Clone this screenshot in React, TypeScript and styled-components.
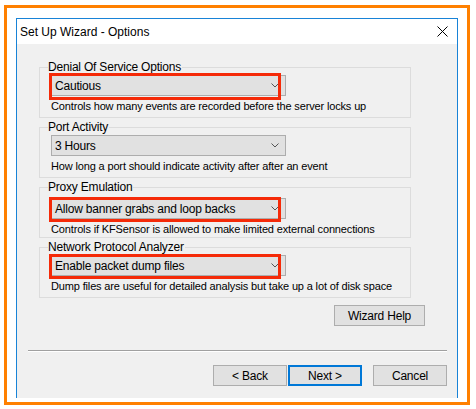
import React from "react";
import styled, { createGlobalStyle } from "styled-components";

const GlobalStyle = createGlobalStyle`
  html, body { margin: 0; padding: 0; background: #ffffff; }
  body { font-family: "Liberation Sans", Arial, sans-serif; color: #000; }
  * { box-sizing: border-box; }
`;

const Page = styled.div`
  width: 476px;
  height: 409px;
  padding: 5px 0 0 4px;
  background: #ffffff;
`;

const Frame = styled.div`
  width: 466px;
  height: 400px;
  border: 3px solid #ff8000;
  padding: 10px 8px 0 9px;
  display: flex;
  flex-direction: column;
  overflow: hidden;
`;

const Window = styled.div`
  width: 442px;
  height: 380px;
  border: 1px solid #1883d7;
  border-bottom: none;
  display: flex;
  flex-direction: column;
  background: #f0f0f0;
`;

const TitleBar = styled.div`
  height: 25px;
  background: #ffffff;
  display: flex;
  align-items: center;
  justify-content: space-between;
  padding: 0 9px 0 3px;
  flex-shrink: 0;
`;

const Title = styled.span`
  font-size: 12px;
  color: #000;
  padding-top: 1px;
`;

const Content = styled.div`
  flex: 1;
  padding: 23px 0 0 22px;
  display: flex;
  flex-direction: column;
`;

const Groups = styled.div`
  display: flex;
  flex-direction: column;
  gap: 9px;
`;

const Group = styled.div<{ $shift?: number }>`
  position: relative;
  width: 372px;
  height: 51px;
  border: 1px solid #dcdcdc;
  padding: ${(p) => 7 + (p.$shift ?? 0)}px 0 0 11px;
`;

const Legend = styled.span`
  position: absolute;
  top: -8px;
  left: 8px;
  padding: 0 1px 0 0;
  background: #f0f0f0;
  font-size: 12px;
  line-height: 14px;
  letter-spacing: -0.2px;
`;

const Select = styled.div`
  width: 235px;
  height: 21px;
  background: #e1e1e1;
  border: 1px solid #adadad;
  display: flex;
  align-items: center;
  justify-content: space-between;
  padding: 0 6px 0 3px;
  font-size: 12px;
  letter-spacing: -0.2px;
`;

const Description = styled.div`
  margin-top: 3px;
  font-size: 11px;
  line-height: 14px;
  letter-spacing: -0.15px;
  white-space: nowrap;
`;

const Highlight = styled.div<{ $top: number; $h: number }>`
  position: absolute;
  left: 9px;
  top: ${(p) => p.$top}px;
  width: 232px;
  height: ${(p) => p.$h}px;
  border: 3px solid #f52a08;
  pointer-events: none;
`;

const HelpRow = styled.div`
  display: flex;
  justify-content: flex-end;
  margin-top: 7px;
  padding-right: 32px;
`;

const Button = styled.button<{ $primary?: boolean; $w?: number }>`
  width: ${(p) => p.$w ?? 74}px;
  height: 21px;
  background: #e1e1e1;
  border: ${(p) => (p.$primary ? "2px solid #0078d7" : "1px solid #adadad")};
  font-family: "Liberation Sans", Arial, sans-serif;
  font-size: 12px;
  letter-spacing: -0.2px;
  color: #000;
  padding: 0;
  margin: 0;
  display: flex;
  align-items: center;
  justify-content: center;
`;

const Separator = styled.div`
  margin: 24px 10px 0 -11px;
  height: 2px;
  border-top: 1px solid #a0a0a0;
  border-bottom: 1px solid #ffffff;
`;

const ButtonRow = styled.div`
  display: flex;
  justify-content: flex-end;
  margin-top: 13px;
  padding-right: 10px;
`;

const NavGap = styled.div<{ $w: number }>`
  width: ${(p) => p.$w}px;
`;

const Chevron = () => (
  <svg width="8" height="5" viewBox="0 0 8 5" style={{ display: "block" }}>
    <path d="M0.5 0.5 L4 4 L7.5 0.5" fill="none" stroke="#555" strokeWidth="1" />
  </svg>
);

const CloseIcon = () => (
  <svg width="11" height="11" viewBox="0 0 11 11" style={{ display: "block" }}>
    <path d="M0.5 0.5 L10.5 10.5 M10.5 0.5 L0.5 10.5" stroke="#000" strokeWidth="1" />
  </svg>
);

type GroupData = {
  title: string;
  value: string;
  desc: string;
  highlight?: { top: number; h: number };
  shift?: number;
};

const groups: GroupData[] = [
  {
    title: "Denial Of Service Options",
    value: "Cautious",
    desc: "Controls how many events are recorded before the server locks up",
    highlight: { top: 5, h: 27 },
  },
  {
    title: "Port Activity",
    value: "3 Hours",
    desc: "How long a port should indicate activity after after an event",
  },
  {
    title: "Proxy Emulation",
    value: "Allow banner grabs and loop backs",
    desc: "Controls if KFSensor is allowed to make limited external connections",
    highlight: { top: 9, h: 25 },
    shift: 3,
  },
  {
    title: "Network Protocol Analyzer",
    value: "Enable packet dump files",
    desc: "Dump files are useful for detailed analysis but take up a lot of disk space",
    highlight: { top: 6, h: 25 },
  },
];

export default function App() {
  return (
    <>
      <GlobalStyle />
      <Page>
        <Frame>
          <Window>
            <TitleBar>
              <Title>Set Up Wizard - Options</Title>
              <CloseIcon />
            </TitleBar>
            <Content>
              <Groups>
                {groups.map((g) => (
                  <Group key={g.title} $shift={g.shift}>
                    <Legend>{g.title}</Legend>
                    <Select>
                      <span>{g.value}</span>
                      <Chevron />
                    </Select>
                    <Description>{g.desc}</Description>
                    {g.highlight && <Highlight $top={g.highlight.top} $h={g.highlight.h} />}
                  </Group>
                ))}
              </Groups>
              <HelpRow>
                <Button $w={91}>Wizard Help</Button>
              </HelpRow>
              <Separator />
              <ButtonRow>
                <Button>&lt; Back</Button>
                <NavGap $w={1} />
                <Button $primary>Next &gt;</Button>
                <NavGap $w={11} />
                <Button>Cancel</Button>
              </ButtonRow>
            </Content>
          </Window>
        </Frame>
      </Page>
    </>
  );
}
